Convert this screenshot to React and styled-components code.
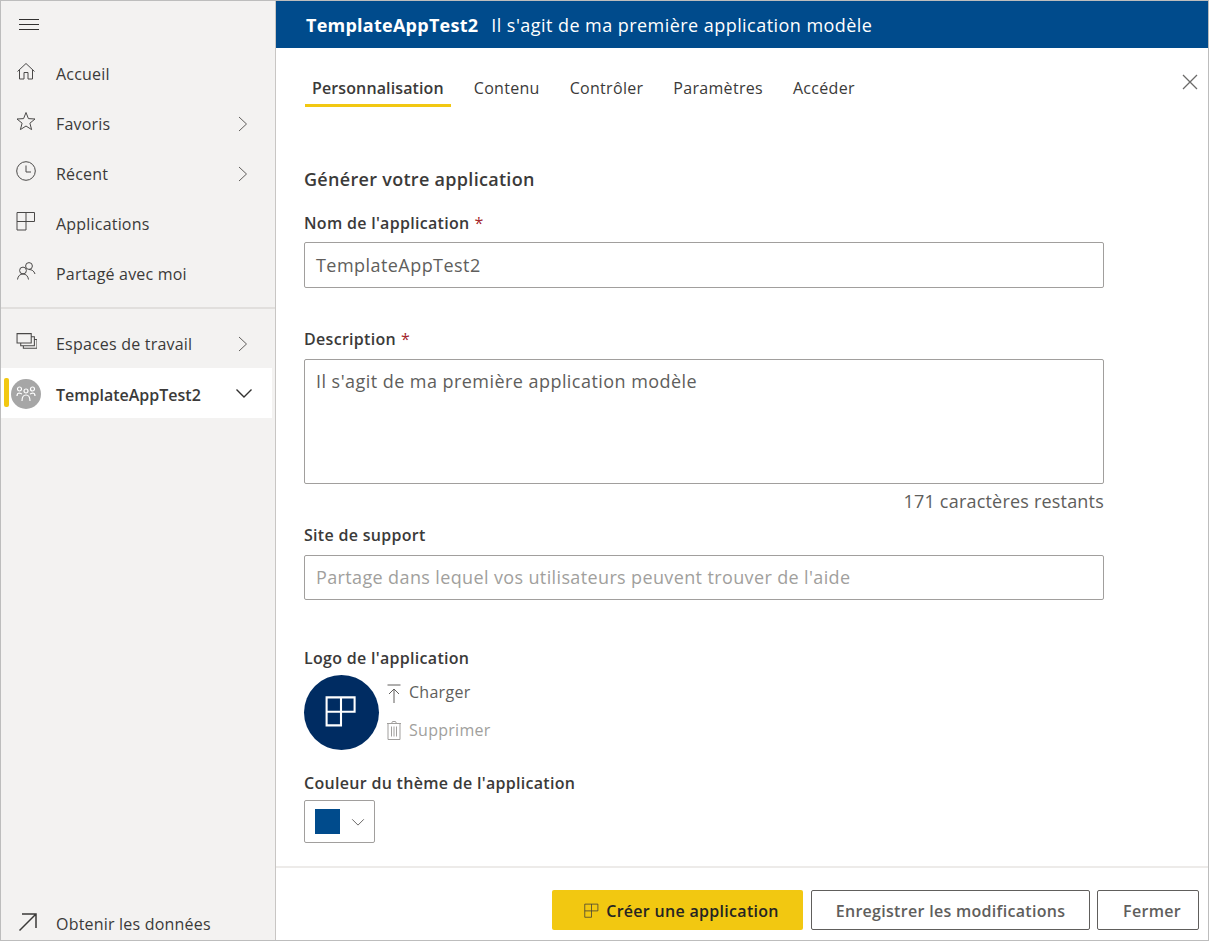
import React from "react";
import styled, { createGlobalStyle } from "styled-components";

const Global = createGlobalStyle`
  html, body { margin: 0; padding: 0; background: #fff; }
  * { box-sizing: border-box; }
  body { font-family: "Open Sans", "Noto Sans", "Liberation Sans", sans-serif; color: #323130; }
`;

const Frame = styled.div`
  width: 1209px; height: 941px; display: flex; overflow: hidden;
  border: 1px solid #bdbdbd;
`;
const Sidebar = styled.aside`
  width: 275px; flex: none; background: #f3f2f1; border-right: 1px solid #c8c6c4;
  display: flex; flex-direction: column; padding-right: 3px;
`;
const Burger = styled.div`height: 47px; padding: 17px 0 0 18px; color: #323130; display: flex;`;
const NavItem = styled.div`
  height: 50px; display: flex; align-items: center; position: relative;
  font-size: 16px; letter-spacing: ${p => p.$active ? "0" : "0.2px"}; color: #3b3a39;
  background: ${p => p.$active ? "#fff" : "transparent"};
  font-weight: ${p => p.$active ? 600 : 400}; padding-top: ${p => p.$active ? "1px" : "0"};
`;
const BottomItem = styled(NavItem)`height: 32px; padding-bottom: 2px;`;
const NavIcon = styled.span`
  width: 55px; padding-left: 15px; flex: none; display: flex; margin-top: -4px;
`;
const NavLabel = styled.span`flex: 1; margin-top: 2px;`;
const Chevron = styled.span`
  width: 37px; flex: none; display: flex; color: #605e5c; margin-top: ${p => p.$open ? -2 : 2}px;
`;
const Rule = styled.div`height: 2px; background: #e1dfdd; margin: 9px -3px 9px 0;`;
const Spacer = styled.div`flex: 1;`;
const Accent = styled.span`
  position: absolute; left: 3px; top: 10px; width: 5px; height: 29px; border-radius: 2px; background: #f2c811;
`;
const Avatar = styled.span`
  width: 30px; height: 30px; border-radius: 50%; background: #a6a6a6; display: flex;
  align-items: center; justify-content: center; margin-left: -5px; margin-top: 4px;
`;
const Main = styled.main`flex: 1; min-width: 0; display: flex; flex-direction: column; position: relative;`;
const Banner = styled.header`
  height: 47px; background: #004b8c; color: #fff; display: flex; align-items: center;
  padding-left: 30px; gap: 13px; font-size: 18px; letter-spacing: 0.45px;
`;
const BannerTitle = styled.strong`font-weight: 700; letter-spacing: 0.25px;`;
const Tabs = styled.nav`display: flex; gap: 16px; padding: 22px 0 0 29px;`;
const Tab = styled.div`
  padding: 0 7px; height: 37px; line-height: 36px; font-size: 16px; color: #3b3a39;
  font-weight: ${p => p.$active ? 600 : 400}; letter-spacing: ${p => p.$active ? "0.12px" : "0.3px"};
  border-bottom: 3px solid ${p => p.$active ? "#f2c811" : "transparent"};
`;
const Close = styled.button`
  position: absolute; right: 9px; top: 72px; width: 18px; height: 18px; padding: 0; border: 0;
  background: none; color: #6b6a69; display: flex;
`;
const Form = styled.section`flex: 1; padding: 59px 0 0 28px; width: 828px;`;
const Title = styled.h2`margin: 0 0 20px; font-size: 18px; line-height: 26px; font-weight: 600; letter-spacing: 0.3px; color: #3b3a39;`;
const Label = styled.label`
  display: block; font-size: 16px; line-height: 22px; font-weight: 600; letter-spacing: 0.3px; color: #3b3a39;
  margin-top: ${p => p.$mt || 0}px;
`;
const Req = styled.span`color: #a4262c; font-weight: 400; margin-left: 5px;`;
const Input = styled.div`
  margin-top: ${p => p.$mt || 8}px; height: ${p => p.$h || 46}px; border: 1px solid #a19f9d; border-radius: 2px;
  padding: ${p => p.$area ? "9px" : "0"} 11px ${p => p.$area ? "0" : "1px"}; display: flex;
  align-items: ${p => p.$area ? "flex-start" : "center"};
  font-size: 18px; letter-spacing: ${p => p.$ph ? "0.37px" : "0.45px"}; color: ${p => p.$ph ? "#a19f9d" : "#605e5c"};
`;
const Counter = styled.div`text-align: right; font-size: 18px; line-height: 24px; margin-top: 5px; color: #605e5c; letter-spacing: 0.2px;`;
const LogoRow = styled.div`display: flex; margin-top: 6px;`;
const LogoCircle = styled.div`
  width: 75px; height: 75px; border-radius: 50%; background: #002c62; display: flex; align-items: center;
  justify-content: center; padding: 0 2px 3px 0;
`;
const LogoActions = styled.div`display: flex; flex-direction: column; gap: 16px; padding: 6px 0 0 7px;`;
const LogoAction = styled.div`
  display: flex; align-items: center; gap: 7px; height: 22px; font-size: 16px; letter-spacing: 0.28px;
  color: ${p => p.$off ? "#a19f9d" : "#605e5c"};
`;
const ColorSelect = styled.div`
  width: 71px; height: 43px; margin-top: 6px; border: 1px solid #a19f9d; border-radius: 2px;
  display: flex; align-items: center; padding-left: 10px; gap: 11px; color: #777;
`;
const Swatch = styled.span`width: 25px; height: 25px; background: #004b8c;`;
const Footer = styled.footer`
  height: 74px; flex: none; border-top: 2px solid #edebe9; display: flex; justify-content: flex-end;
  align-items: flex-start; padding: 22px 9px 0 0; gap: 8px;
`;
const Button = styled.button`
  height: 40px; width: ${p => p.$w}px; border-radius: 2px; font: inherit; font-size: 16px; letter-spacing: 0.3px;
  font-weight: 600; display: flex; align-items: center; justify-content: center; gap: 7px;
  padding: 1px 0 0 ${p => p.$pl || 0}px;
  margin-left: ${p => p.$ml || 0}px;
  border: ${p => p.$primary ? "0" : "1px solid #605e5c"};
  background: ${p => p.$primary ? "#f2c811" : "#fff"}; color: ${p => p.$primary ? "#252423" : "#605e5c"};
`;

const S = ({ size = 20, vb = 20, children, ...r }) => (
  <svg width={size} height={size} viewBox={`0 0 ${vb} ${vb}`} fill="none" stroke="currentColor" strokeWidth="1" {...r}>{children}</svg>
);
const AppsIcon = ({ size = 20, sw = 1, color = "#4a4948" }) => (
  <svg width={size} height={size} viewBox="0 0 20 20" fill="none" stroke={color} strokeWidth={sw}>
    <path d="M1 1.500h17.500v9H10v8.500H1zM1 10.500h9M10 1.500v9" />
  </svg>
);
const Home = () => (
  <S><path d="M1.500 10.500 10 2.500l8.500 8M3.500 9v9h4.500v-6.500h4V18h4.500V9" stroke="#4a4948" /></S>
);
const Star = () => (
  <S><path d="M10 1.500l2.400 6.100 6.600.4-5.100 4.200 1.700 6.400L10 15l-5.600 3.600 1.700-6.400L1 8l6.600-.4z" stroke="#4a4948" /></S>
);
const Clock = () => (
  <S><circle cx="10" cy="10" r="9.300" stroke="#4a4948" /><path d="M10 4.500V11H15" stroke="#4a4948" /></S>
);
const People = () => (
  <S><circle cx="13" cy="5" r="3.400" stroke="#4a4948" /><circle cx="7" cy="9.500" r="3.400" stroke="#4a4948" /><path d="M1.500 18.500c.5-3.500 2.500-5.500 5.500-5.500s5 2 5.500 5.500M13 8.500c3 0 5 1.500 6 4.500" stroke="#4a4948" /></S>
);
const Stack = () => (
  <S size={21}><path d="M1 2.500h13.500v9H1zM14.500 5.500H17.500V14H4.500v-2.500M17.500 8H20v8.500H7V14" stroke="#4a4948" /></S>
);
const Right = () => (
  <S size={16} vb={16}><path d="M4 1l7.500 7L4 15" stroke="#605e5c" /></S>
);
const Down = ({ size = 18, sw = 1.400, color = "#323130" }) => (
  <svg width={size} height={size} viewBox="0 0 18 18" fill="none" stroke={color} strokeWidth={sw}><path d="M1.500 5.500 9 13l7.500-7.500" /></svg>
);

const nav = [
  [Home, "Accueil", false],
  [Star, "Favoris", true],
  [Clock, "Récent", true],
  [() => <AppsIcon />, "Applications", false],
  [People, "Partagé avec moi", false],
];

export default function App() {
  return (
    <>
      <Global />
      <Frame>
        <Sidebar>
          <Burger>
            <S size={20}><path d="M0 1.500h20M0 6.500h20M0 11.500h20" stroke="#323130" /></S>
          </Burger>
          {nav.map(([Icon, text, more]) => (
            <NavItem key={text}>
              <NavIcon><Icon /></NavIcon>
              <NavLabel>{text}</NavLabel>
              {more && <Chevron><Right /></Chevron>}
            </NavItem>
          ))}
          <Rule />
          <NavItem>
            <NavIcon><Stack /></NavIcon>
            <NavLabel>Espaces de travail</NavLabel>
            <Chevron><Right /></Chevron>
          </NavItem>
          <NavItem $active>
            <Accent />
            <NavIcon>
              <Avatar>
                <svg width="20" height="16" viewBox="0 0 20 16" fill="none" stroke="#fff" strokeWidth="1.200">
                  <circle cx="10" cy="5" r="2" /><circle cx="3.500" cy="3" r="2" /><circle cx="16.500" cy="3" r="2" />
                  <path d="M6 15c0-4 1.500-6 4-6s4 2 4 6M1 10c0-2 1-3 2.500-3L6 8M19 10c0-2-1-3-2.500-3L14 8" />
                </svg>
              </Avatar>
            </NavIcon>
            <NavLabel>TemplateAppTest2</NavLabel>
            <Chevron $open><Down /></Chevron>
          </NavItem>
          <Spacer />
          <BottomItem>
            <NavIcon>
              <S size={20} style={{ marginLeft: 2, marginTop: 2 }}><path d="M1.500 18.500 18 2M4 2h14v14" stroke="#3b3a39" strokeWidth="1.500" /></S>
            </NavIcon>
            <NavLabel>Obtenir les données</NavLabel>
          </BottomItem>
        </Sidebar>
        <Main>
          <Banner>
            <BannerTitle>TemplateAppTest2</BannerTitle>
            <span>Il s'agit de ma première application modèle</span>
          </Banner>
          <Tabs>
            <Tab $active>Personnalisation</Tab>
            <Tab>Contenu</Tab>
            <Tab>Contrôler</Tab>
            <Tab>Paramètres</Tab>
            <Tab>Accéder</Tab>
          </Tabs>
          <Close aria-label="Fermer">
            <svg width="18" height="18" viewBox="0 0 18 18" fill="none" stroke="currentColor" strokeWidth="1.300"><path d="M2 2l14 14M16 2 2 16" /></svg>
          </Close>
          <Form>
            <Title>Générer votre application</Title>
            <Label>Nom de l'application<Req>*</Req></Label>
            <Input>TemplateAppTest2</Input>
            <Label $mt={40}>Description<Req>*</Req></Label>
            <Input $area $h={125} $mt={9}>Il s'agit de ma première application modèle</Input>
            <Counter>171 caractères restants</Counter>
            <Label $mt={11}>Site de support</Label>
            <Input $ph $h={45} $mt={9}>Partage dans lequel vos utilisateurs peuvent trouver de l'aide</Input>
            <Label $mt={47}>Logo de l'application</Label>
            <LogoRow>
              <LogoCircle><AppsIcon size={32} sw={1.300} color="#fff" /></LogoCircle>
              <LogoActions>
                <LogoAction>
                  <svg width="16" height="20" viewBox="0 0 16 20" fill="none" stroke="#605e5c" strokeWidth="1" style={{ marginTop: 3 }}><path d="M1.500 1h13M8 19V5M3 10l5-5 5 5" /></svg>
                  Charger
                </LogoAction>
                <LogoAction $off>
                  <svg width="16" height="20" viewBox="0 0 16 20" fill="none" stroke="#a19f9d" strokeWidth="1"><path d="M1 3.500h14M5.500 3.500l1-2h3l1 2M2 3.500v16h12v-16M5.500 6.500v10M8 6.500v10M10.500 6.500v10" /></svg>
                  Supprimer
                </LogoAction>
              </LogoActions>
            </LogoRow>
            <Label $mt={22}>Couleur du thème de l'application</Label>
            <ColorSelect><Swatch /><Down size={14} sw={1.200} color="#605e5c" /></ColorSelect>
          </Form>
          <Footer>
            <Button $primary $w={251} $pl={8}><AppsIcon size={15} color="#3b3a39" />Créer une application</Button>
            <Button $w={279}>Enregistrer les modifications</Button>
            <Button $w={102} $ml={-1} $pl={8}>Fermer</Button>
          </Footer>
        </Main>
      </Frame>
    </>
  );
}
